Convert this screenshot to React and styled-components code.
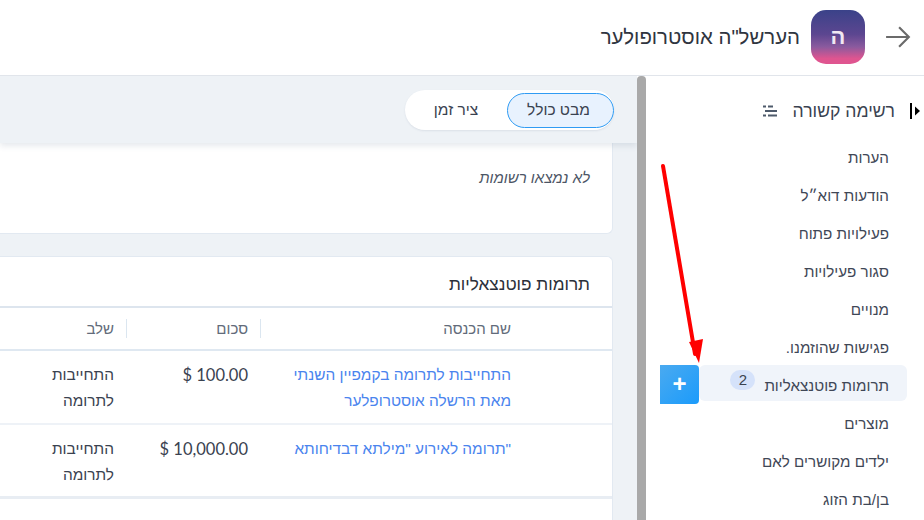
import React from 'react';
import styled, { createGlobalStyle } from 'styled-components';

const FONT = '"Liberation Sans", Arial, sans-serif';

const sideItems = [
  { label: 'הערות' },
  { label: 'הודעות דוא״ל' },
  { label: 'פעילויות פתוח' },
  { label: 'סגור פעילויות' },
  { label: 'מנויים' },
  { label: 'פגישות שהוזמנו.' },
  { label: 'תרומות פוטנצאליות', count: 2, active: true },
  { label: 'מוצרים' },
  { label: 'ילדים מקושרים לאם' },
  { label: 'בן/בת הזוג' },
];

const rows = [
  {
    name: 'התחייבות לתרומה בקמפיין השנתי מאת הרשלה אוסטרופלער',
    amount: '$ 100.00',
    stage: 'התחייבות לתרומה',
  },
  {
    name: '"תרומה לאירוע "מילתא דבדיחותא',
    amount: '$ 10,000.00',
    stage: 'התחייבות לתרומה',
  },
];

const App = () => (
  <Page dir="rtl">
    <GlobalStyle />
    <Header>
      <BackIcon viewBox="0 0 24 24">
        <path d="M1 12h21M13 3l9 9-9 9" />
      </BackIcon>
      <Avatar>ה</Avatar>
      <PageTitle>הערשל"ה אוסטרופולער</PageTitle>
    </Header>

    <Body>
      <Sidebar>
        <SideHead>
          <CollapseIcon viewBox="0 0 10 16">
            <rect x="0" y="0" width="2" height="16" />
            <path d="M10 8 5 3.5v9z" />
          </CollapseIcon>
          <SideTitle>רשימה קשורה</SideTitle>
          <ListIcon viewBox="0 0 14 12">
            <path d="M5 1.5h5M2 6h12M5 10.5h9" />
            <path d="M0 1.5h3M0 10.5h3" />
          </ListIcon>
        </SideHead>
        <SideList>
          {sideItems.map((item) => (
            <SideRow key={item.label} $active={item.active}>
              <SideLabel>{item.label}</SideLabel>
              {item.count && <Badge>{item.count}</Badge>}
              {item.active && <AddButton>+</AddButton>}
            </SideRow>
          ))}
        </SideList>
      </Sidebar>

      <ScrollBar />

      <Main>
        <Toolbar>
          <Tabs>
            <Tab $active>מבט כולל</Tab>
            <Tab>ציר זמן</Tab>
          </Tabs>
        </Toolbar>

        <Content>
          <EmptyCard>
            <EmptyText>לא נמצאו רשומות</EmptyText>
          </EmptyCard>

          <Card>
            <CardTitle>תרומות פוטנצאליות</CardTitle>
            <HeadRow>
              <HeadCell>שם הכנסה</HeadCell>
              <HeadCell>סכום</HeadCell>
              <HeadCell $last>שלב</HeadCell>
            </HeadRow>
            {rows.map((row) => (
              <DataRow key={row.amount}>
                <NameCell>{row.name}</NameCell>
                <Cell><Amount>{row.amount}</Amount></Cell>
                <StageCell>{row.stage}</StageCell>
              </DataRow>
            ))}
          </Card>
        </Content>
      </Main>

      <RedArrow viewBox="0 0 60 210">
        <path d="M3 2 35 190" />
        <path d="M39 199 29 178 43 175z" />
      </RedArrow>
    </Body>
  </Page>
);

const GlobalStyle = createGlobalStyle`
  html, body {
    margin: 0;
    height: 100%;
    background: #fff;
    overflow: hidden;
  }
  * {
    box-sizing: border-box;
  }
`;

const Page = styled.div`
  width: 924px;
  height: 520px;
  display: flex;
  flex-direction: column;
  font-family: ${FONT};
  color: #3a4250;
  overflow: hidden;
`;

// HEADER
const Header = styled.header`
  height: 76px;
  flex: none;
  display: flex;
  align-items: center;
  padding: 0 13px 1px 0;
  border-bottom: 1px solid #e1e5eb;
  background: #fff;
`;

const BackIcon = styled.svg`
  width: 26px;
  height: 26px;
  fill: none;
  stroke: #6b6b6b;
  stroke-width: 2;
`;

const Avatar = styled.div`
  width: 54px;
  height: 54px;
  margin-right: 20px;
  border-radius: 15px;
  display: flex;
  align-items: center;
  justify-content: center;
  color: #f1e8f2;
  font-size: 22px;
  font-weight: 700;
  background: linear-gradient(180deg, #3a4289 0%, #5c4690 45%, #8a5a9e 68%, #df5590 90%);
`;

const PageTitle = styled.h1`
  margin: 0 11px 0 0;
  font-size: 20.4px;
  font-weight: 400;
  color: #2f3540;
`;

const Body = styled.div`
  position: relative;
  flex: 1;
  min-height: 0;
  display: flex;
`;

// SIDEBAR
const Sidebar = styled.aside`
  width: 278px;
  flex: none;
  padding: 0 17px 0 53px;
  background: #fff;
`;

const SideHead = styled.div`
  height: 60px;
  display: flex;
  align-items: center;
  padding-top: 10px;
  margin-left: -53px;
`;

const CollapseIcon = styled.svg`
  width: 10px;
  height: 16px;
  flex: none;
  fill: #000;
  margin-right: -13px;
`;

const SideTitle = styled.span`
  margin-right: 15px;
  font-size: 17.6px;
  color: #3a4250;
`;

const ListIcon = styled.svg`
  width: 14px;
  height: 12px;
  margin-right: 16px;
  fill: none;
  stroke: #4e5a6b;
  stroke-width: 2;
`;

const SideList = styled.div`
  display: flex;
  flex-direction: column;
`;

const SideRow = styled.div`
  position: relative;
  height: 36px;
  margin-bottom: 2.1px;
  padding: 6px 18px 0 0;
  display: flex;
  align-items: center;
  border-radius: 6px;
  background: ${(props) => (props.$active ? '#f0f4fa' : 'transparent')};
`;

const SideLabel = styled.span`
  font-size: 15.2px;
  color: #3f4756;
  white-space: nowrap;
`;

const Badge = styled.span`
  width: 25px;
  height: 20px;
  margin-right: 9px;
  margin-top: -12px;
  border-radius: 10px;
  display: flex;
  align-items: center;
  justify-content: center;
  font-size: 15px;
  background: #d5e2fa;
  color: #3a4250;
`;

const AddButton = styled.div`
  position: absolute;
  top: 0;
  left: -39px;
  width: 39px;
  height: 39px;
  display: flex;
  align-items: center;
  justify-content: center;
  font-size: 24px;
  font-weight: 600;
  color: #fff;
  border-radius: 0 4px 4px 0;
  background: linear-gradient(135deg, #4aaaf0, #1b9bfb);
`;

const ScrollBar = styled.div`
  width: 9px;
  flex: none;
  border-radius: 4px 4px 0 0;
  background: #a9a9a9;
`;

// MAIN
const Main = styled.main`
  flex: 1;
  min-width: 0;
  display: flex;
  flex-direction: column;
  background: #eef2f6;
  overflow: hidden;
`;

const Toolbar = styled.div`
  position: relative;
  z-index: 1;
  height: 67px;
  flex: none;
  display: flex;
  align-items: flex-start;
  padding: 14px 23px 0 0;
  background: #eef2f6;
  box-shadow: 0 3px 6px rgba(80, 100, 130, 0.14);
`;

const Tabs = styled.div`
  width: 209px;
  height: 40px;
  display: flex;
  align-items: center;
  border-radius: 20px;
  background: #fff;
  box-shadow: 0 1px 2px rgba(80, 100, 130, 0.12);
`;

const Tab = styled.div`
  height: 35px;
  width: ${(props) => (props.$active ? '107px' : '102px')};
  padding-right: ${(props) => (props.$active ? '4px' : '0')};
  display: flex;
  align-items: center;
  justify-content: center;
  font-size: 15.5px;
  color: #3a4250;
  border-radius: 18px;
  border: ${(props) => (props.$active ? '1px solid #2f9bf3' : 'none')};
  background: ${(props) => (props.$active ? '#e8f2fe' : 'transparent')};
`;

const Content = styled.div`
  display: flex;
  flex-direction: column;
  gap: 22px;
  padding-right: 24px;
  margin-left: -10px;
`;

const EmptyCard = styled.section`
  height: 91px;
  padding: 26px 22px 0 0;
  background: #fff;
  border-radius: 0 0 6px 6px;
  border: 1px solid #e2e9f1;
  border-top: none;
`;

const EmptyText = styled.p`
  margin: 0;
  font-size: 15px;
  font-style: italic;
  color: #4c5565;
`;

const Card = styled.section`
  background: #fff;
  border-radius: 6px;
  border: 1px solid #e2e9f1;
  border-bottom: none;
  height: 300px;
`;

const CardTitle = styled.h2`
  height: 51px;
  margin: 0;
  padding: 17px 22px 0 0;
  font-size: 17.2px;
  font-weight: 500;
  color: #2b303a;
  border-bottom: 2px solid #dde5ee;
`;

const tableColumns = `
  display: grid;
  grid-template-columns: 352px 134px 1fr;
`;

const HeadRow = styled.div`
  ${tableColumns}
  height: 43px;
  align-items: center;
  border-bottom: 2px solid #dfe8f1;
`;

const HeadCell = styled.div`
  height: 19px;
  padding-right: ${(props) => (props.$last ? '12px' : '101px')};
  font-size: 15px;
  line-height: 19px;
  color: #626b7a;
  border-left: ${(props) => (props.$last ? 'none' : '1px solid #dbe6f0')};
  &:nth-child(2) {
    padding-right: 12px;
  }
`;

const DataRow = styled.div`
  ${tableColumns}
  height: 74px;
  padding-top: 11px;
  border-bottom: 2px solid #eef2f7;
  &:last-child {
    border-bottom-width: 3px;
    border-bottom-color: #e8edf3;
  }
`;

const Cell = styled.div`
  padding: 0 12px 0 10px;
  font-size: 15.4px;
  line-height: 26px;
  color: #3a4250;
`;

const NameCell = styled(Cell)`
  padding: 0 101px 0 20px;
  color: #4a84ee;
`;

const StageCell = styled(Cell)`
  padding-left: 50px;
`;

const Amount = styled.span`
  font-family: Lato, "Liberation Sans", sans-serif;
  font-size: 16.5px;
  direction: ltr;
  unicode-bidi: plaintext;
`;

const RedArrow = styled.svg`
  position: absolute;
  top: 88px;
  left: 660px;
  width: 60px;
  height: 210px;
  overflow: visible;
  fill: #f00;
  stroke: none;
  pointer-events: none;
  & path:first-child {
    fill: none;
    stroke: #f00;
    stroke-width: 4;
    stroke-linecap: round;
  }
`;

export default App;
